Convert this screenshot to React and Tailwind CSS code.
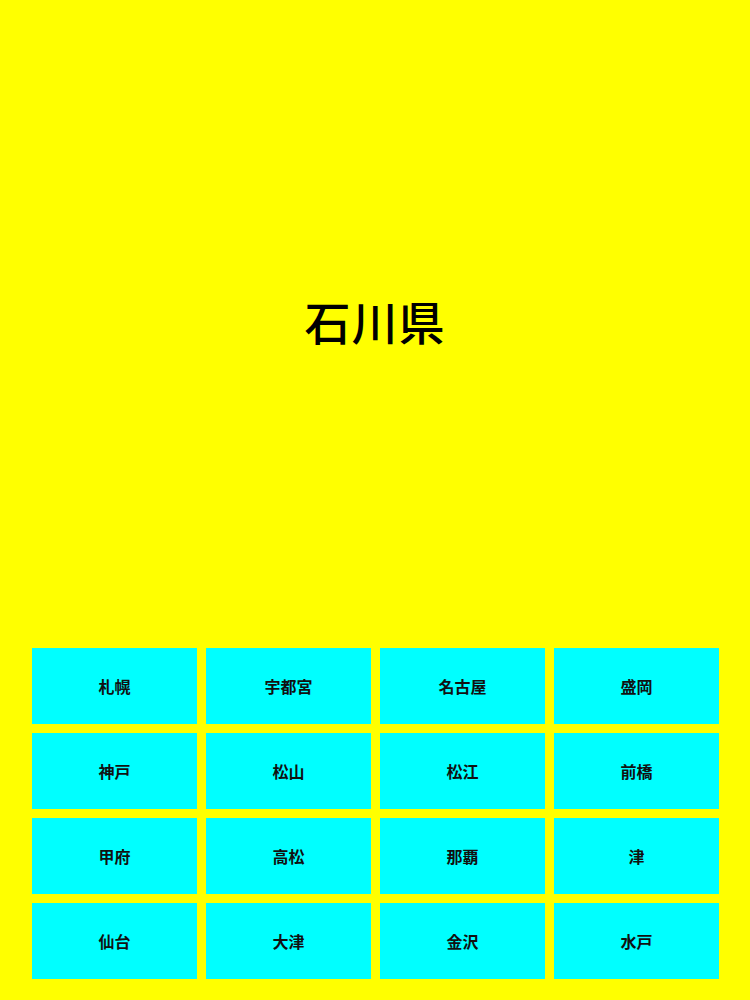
import React from "react";

const CITIES = [
  "札幌", "宇都宮", "名古屋", "盛岡",
  "神戸", "松山", "松江", "前橋",
  "甲府", "高松", "那覇", "津",
  "仙台", "大津", "金沢", "水戸",
];

export default function App() {
  return (
    <div className="flex h-[1000px] w-[750px] flex-col bg-[#ffff00]" style={{ fontFamily: '"Noto Sans CJK JP", "Noto Sans", sans-serif' }}>
      <div className="flex h-[639px] items-center justify-center">
        <h1 className="text-[46px] font-medium leading-none tracking-[1px] text-black">石川県</h1>
      </div>
      <div className="grid grid-cols-4 gap-[9px] pl-[32px] pr-[31px] pt-[9px]">
        {CITIES.map((c) => (
          <button key={c} className="flex h-[76px] items-center justify-center bg-[#00ffff] text-[16px] font-semibold text-[#111]">
            {c}
          </button>
        ))}
      </div>
    </div>
  );
}
